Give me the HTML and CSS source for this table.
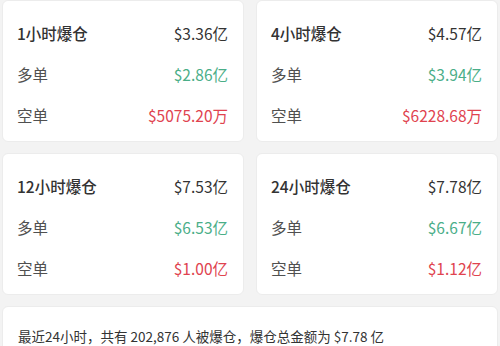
FILE: index.html
```html
<!DOCTYPE html>
<html lang="zh-CN">
<head>
<meta charset="utf-8">
<title>爆仓统计</title>
<link rel="stylesheet" href="styles.css">
</head>
<body>
<div class="page">
  <div class="grid">
    <div class="card">
      <div class="row title"><span class="name">1小时爆仓</span><span class="val">$3.36亿</span></div>
      <div class="row"><span class="lbl">多单</span><span class="val up">$2.86亿</span></div>
      <div class="row"><span class="lbl">空单</span><span class="val down">$5075.20万</span></div>
    </div>
    <div class="card">
      <div class="row title"><span class="name">4小时爆仓</span><span class="val">$4.57亿</span></div>
      <div class="row"><span class="lbl">多单</span><span class="val up">$3.94亿</span></div>
      <div class="row"><span class="lbl">空单</span><span class="val down">$6228.68万</span></div>
    </div>
    <div class="card">
      <div class="row title"><span class="name">12小时爆仓</span><span class="val">$7.53亿</span></div>
      <div class="row"><span class="lbl">多单</span><span class="val up">$6.53亿</span></div>
      <div class="row"><span class="lbl">空单</span><span class="val down">$1.00亿</span></div>
    </div>
    <div class="card">
      <div class="row title"><span class="name">24小时爆仓</span><span class="val">$7.78亿</span></div>
      <div class="row"><span class="lbl">多单</span><span class="val up">$6.67亿</span></div>
      <div class="row"><span class="lbl">空单</span><span class="val down">$1.12亿</span></div>
    </div>
  </div>
  <div class="summary">最近24小时，共有 202,876 人被爆仓，爆仓总金额为 $7.78 亿</div>
</div>
</body>
</html>
```

FILE: styles.css
```css
html, body {
  margin: 0;
  padding: 0;
}
body {
  background: #f3f3f3;
  font-family: "Noto Sans CJK SC", "Noto Sans", sans-serif;
  color: #333;
  width: 500px;
  height: 346px;
  overflow: hidden;
}
.page {
  padding: 0 2px;
  display: flex;
  flex-direction: column;
  gap: 11px;
}
.grid {
  display: grid;
  grid-template-columns: 1fr 1fr;
  column-gap: 12px;
  row-gap: 11px;
}
.card {
  background: #fff;
  border: 1px solid #ececec;
  border-radius: 6px;
  height: 142px;
  box-sizing: border-box;
  padding: 12px 15px 6px 14px;
  display: flex;
  flex-direction: column;
}
.row {
  height: 41px;
  display: flex;
  align-items: center;
  justify-content: space-between;
  font-size: 15.5px;
}
.name {
  font-weight: 500;
  color: #333;
}
.lbl {
  color: #505050;
}
.val {
  color: #333;
}
.up {
  color: #4aae88;
}
.down {
  color: #e0434f;
}
.summary {
  background: #fff;
  border: 1px solid #ececec;
  border-radius: 6px;
  padding: 19px 15px 20px;
  font-size: 13.5px;
  line-height: 20px;
  color: #333;
}
```
